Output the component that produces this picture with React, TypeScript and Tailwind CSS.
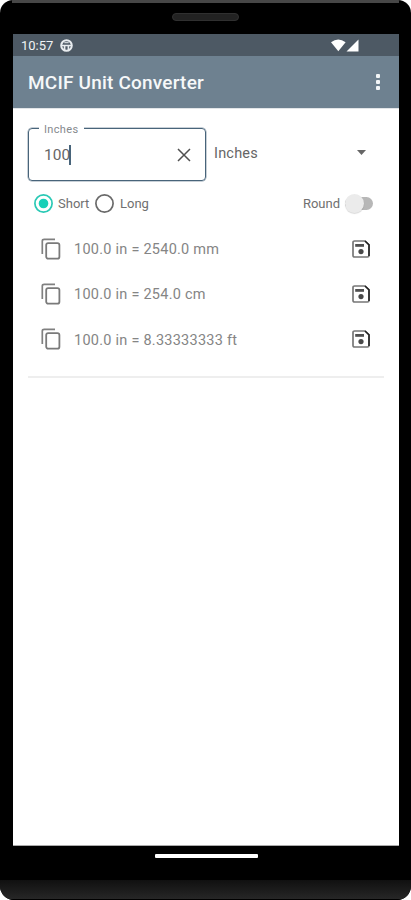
import { useState } from 'react';

interface Conversion {
  id: string;
  texto: string;
}

const conversions: Conversion[] = [
  { id: 'mm', texto: '100.0 in = 2540.0 mm' },
  { id: 'cm', texto: '100.0 in = 254.0 cm' },
  { id: 'ft', texto: '100.0 in = 8.33333333 ft' },
];

const CopyIcon = () => (
  <svg width="20" height="22" viewBox="0 0 20 22" fill="none">
    <path d="M1.3 16V3Q1.3 1.3 3.2 1.3H14" stroke="#808080" strokeWidth="1.7" />
    <rect x="5.2" y="5.1" width="13.2" height="15.6" rx="2" stroke="#7a7a7a" strokeWidth="1.8" />
  </svg>
);

const SaveIcon = () => (
  <svg width="18" height="18" viewBox="0 0 18 18" fill="none">
    <path d="M2.6 1H13L17 4.8V15.4Q17 17 15.4 17H2.6Q1 17 1 15.4V2.6Q1 1 2.6 1Z" stroke="#777" strokeWidth="1.7" />
    <path d="M13 1L17 4.8V16" stroke="#222" strokeWidth="1.5" />
    <rect x="3.2" y="4" width="8.8" height="2.8" fill="#505050" />
    <circle cx="9" cy="11.6" r="2.6" fill="#484848" />
  </svg>
);

const StatusBar = () => (
  <div className="flex h-[22px] items-center bg-[#4d5964] pl-2 pr-[40px] text-[#f0f3f5]">
    <span className="w-[34px] whitespace-nowrap text-[13px] leading-none">10:57</span>
    <svg className="ml-[5px]" width="13" height="13" viewBox="0 0 13 13" fill="none">
      <circle cx="6.5" cy="6.5" r="5.3" stroke="#e8ecef" strokeWidth="2" />
      <path d="M1.5 6.5H11.5M4.6 7V11M8.4 7V11" stroke="#e8ecef" strokeWidth="1.6" />
      <path d="M4.3 3.7H8.7" stroke="#e8ecef" strokeWidth="1" />
    </svg>
    <svg className="ml-auto" width="28" height="13" viewBox="0 0 28 13" fill="#fff">
      <path d="M0 3.2Q7.2 -2 14.6 3.2L7.3 12.2Z" />
      <path d="M27.5 0.5V12.4H15.5Z" />
    </svg>
  </div>
);

const AppBar = () => (
  <header className="flex h-[52px] items-center justify-between bg-[#6e8190] pl-[15px] pr-[19px] pt-[3px]">
    <h1 className="whitespace-nowrap text-[19px] font-medium tracking-[0.2px] text-[#f6f8f9]">MCIF Unit Converter</h1>
    <button className="mb-[3px] flex flex-col gap-[2px]" aria-label="Menu">
      <span className="size-[4px] rounded-[1px] bg-[#f2f5f7]" />
      <span className="size-[4px] rounded-[1px] bg-[#f2f5f7]" />
      <span className="size-[4px] rounded-[1px] bg-[#f2f5f7]" />
    </button>
  </header>
);

interface RadioProps {
  checked: boolean;
}

const Radio = ({ checked }: RadioProps) => (
  <svg width="19" height="19" viewBox="0 0 19 19" fill="none">
    <circle cx="9.5" cy="9.5" r="8.6" stroke={checked ? '#2ac9b5' : '#6a6a6a'} strokeWidth="1.7" />
    {checked && <circle cx="9.5" cy="9.5" r="4.8" fill="#18d0b8" />}
  </svg>
);

export default function App() {
  const [length, setLength] = useState<'short' | 'long'>('short');

  return (
    <div className="h-[900px] w-[411px] overflow-hidden bg-white font-['Roboto',sans-serif]">
      <div className="flex h-full flex-col overflow-hidden rounded-t-[13px] rounded-b-[14px] bg-black">
        {/* Top edge and speaker */}
        <div className="mx-3 h-[3px] shrink-0 bg-[#474747]" />
        <div className="flex h-[31px] shrink-0 justify-center pt-[10px]">
          <div className="h-[8px] w-[67px] rounded-full border border-[#303030] bg-[#222]" />
        </div>

        {/* Screen */}
        <div className="ml-[13px] flex h-[812px] w-[386px] shrink-0 flex-col border-b border-[#aaa] bg-white">
          <StatusBar />
          <AppBar />

          <main className="flex flex-col border-t border-[#e2e5e8] px-[15px] pt-[19px]">
            <div className="flex">
              <div className="relative flex h-[53px] w-[178px] items-center justify-between rounded-[4px] border border-[#48647a] pl-[15px] pr-[14px] shadow-[0_0_0_0.5px_#91a2af]">
                <span className="absolute left-[10px] top-[-6px] bg-white px-[5px] text-[11px] leading-[14px] tracking-[0.35px] text-[#85898d]">
                  Inches
                </span>
                <span className="flex items-center pt-[2px] text-[15.5px] text-[#666]">
                  100
                  <span className="-ml-px mb-[2px] h-[20px] w-[1.5px] bg-[#48647a]" />
                </span>
                <svg width="14" height="14" viewBox="0 0 14 14" stroke="#505050" strokeWidth="1.5">
                  <path d="M1 1L13 13M13 1L1 13" />
                </svg>
              </div>
              <div className="flex h-[49px] flex-1 items-center justify-between pl-[8px] pr-[18px]">
                <span className="pt-[2px] text-[14.5px] tracking-[0.2px] text-[#666]">Inches</span>
                <svg width="9" height="5" viewBox="0 0 9 5" fill="#666">
                  <path d="M0 0H9L4.5 5Z" />
                </svg>
              </div>
            </div>

            <div className="mt-[12px] flex h-[20px] items-center pl-[6px] text-[13px] text-[#707070]">
              <button className="flex items-center" onClick={() => setLength('short')}>
                <Radio checked={length === 'short'} />
                <span className="ml-[5px] w-[37px] whitespace-nowrap pt-px text-left">Short</span>
              </button>
              <button className="flex items-center" onClick={() => setLength('long')}>
                <Radio checked={length === 'long'} />
                <span className="ml-[6px] pt-px">Long</span>
              </button>
              <span className="ml-auto pt-px">Round</span>
              <div className="relative ml-[5px] mr-[11px] h-[13px] w-[28px] rounded-full bg-[#b7b7b7]">
                <span className="absolute left-0 top-[-3px] size-[19px] rounded-full bg-[#ebebeb] shadow-[0_1px_1px_rgba(0,0,0,0.15)]" />
              </div>
            </div>

            <ul className="mt-[13px] flex flex-col">
              {conversions.map((c) => (
                <li key={c.id} className="flex h-[45.4px] items-center pl-[13px] pr-[14px]">
                  <CopyIcon />
                  <span className="ml-[13px] whitespace-nowrap pt-[2px] text-[14.5px] tracking-[0.25px] text-[#858585]">{c.texto}</span>
                  <span className="ml-auto">
                    <SaveIcon />
                  </span>
                </li>
              ))}
            </ul>
            <div className="mt-[14px] h-[2px] bg-[#eee]" />
          </main>
        </div>

        {/* Gesture bar */}
        <div className="flex flex-1 justify-center pt-[8px]">
          <div className="ml-px h-[4px] w-[103px] rounded-[1px] bg-white" />
        </div>
        <div className="h-[20px] shrink-0 border-b border-black bg-gradient-to-b from-[#101010] to-[#272727]" />
      </div>
    </div>
  );
}
